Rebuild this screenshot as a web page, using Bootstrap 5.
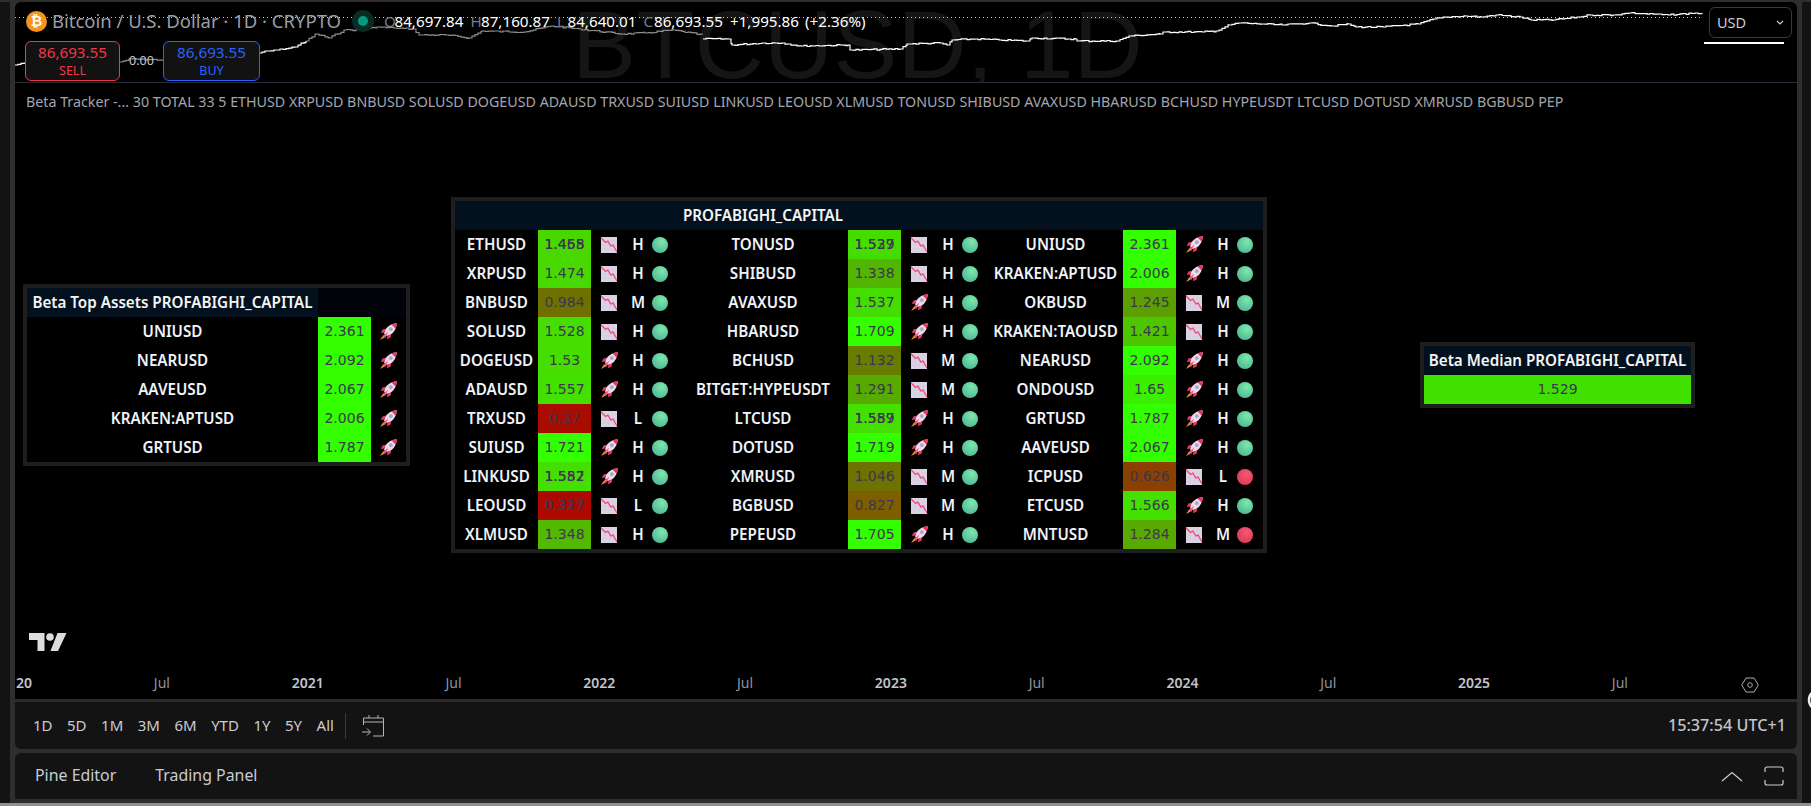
<!DOCTYPE html>
<html lang="en">
<head>
<meta charset="utf-8">
<title>BTCUSD 1D</title>
<link href="https://cdn.jsdelivr.net/npm/bootstrap@5.3.0/dist/css/bootstrap.min.css" rel="stylesheet">
<style>
html,body{height:806px;overflow:hidden}
body{background:#2e2e2e;font-family:"Noto Sans","Open Sans",sans-serif;color:#d1d4dc;padding-top:2px}
.side-l{width:10px;background:#131313;flex:none;height:801px}
.side-r{width:9px;background:#131313;flex:none;height:801px;overflow:hidden}
.side-r svg{display:block;margin-top:686px;margin-left:5px}
.main-col{width:1782px;margin:0 5px;flex:none}
.pane{height:699px;background:#000;overflow:hidden;border-radius:6px 6px 0 0;position:relative}
.chart-head{height:81px;border-bottom:1px solid #2a2e39;position:relative;overflow:hidden}
.spark{position:absolute;left:0;top:0}
.wm{position:absolute;left:557px;top:-21px;font:96px/128px "Liberation Sans",sans-serif;color:#151515;white-space:nowrap}
.head-row{position:relative;height:24px;margin-top:7px;padding-left:11px;white-space:nowrap}
.btc{width:21px;height:21px;border-radius:50%;background:#f7931a;color:#fff;font:700 14px/21px "Liberation Sans",sans-serif;text-align:center;flex:none}
.sym{font-size:18.5px;color:#9a9ea8;margin-left:5px;width:300px;flex:none}
.live{width:22px;height:22px;border-radius:50%;background:#0a2a24;flex:none;margin-right:10px}
.live i{width:10px;height:10px;border-radius:50%;background:#089981;display:block}
.ohlc{font-size:15.2px;color:#fff}
.ohlc b{display:inline-block;width:10.5px;font-weight:400;color:#787b86}
.ohlc span{display:block;flex:none}
.ohlc .pr{width:86.5px}
.ohlc .ch{width:75px}
.quote-row{position:relative;margin:8px 0 0 10px}
.qbtn{width:95px;height:40px;background:#121212;border:1px solid;border-radius:6px;text-align:center;font-size:15.2px;line-height:19px;padding-top:1px}
.qbtn small{display:block;font-size:12.5px;line-height:17px}
.qsell{color:#f23645;border-color:#f23645}
.qbuy{color:#2962ff;border-color:#2962ff;width:97px}
.zero{width:43px;text-align:center;font-size:12.5px;color:#c8c8c8;padding-top:11px}
.cur-wrap{position:absolute;left:1694px;top:5px;width:83px;height:31px;border:1px solid #3a3a3a;border-radius:6px;background:#000;font-size:14.5px;color:#c9ccd4;padding:0 7px}
.cur-bar{position:absolute;left:1689px;top:40px;width:80px;height:2px;background:#fff}
.ind-line{padding:9px 0 0 11px;height:30px;width:1549px;overflow:hidden;white-space:nowrap;font-size:14.25px;line-height:20px;color:#a3a6af}
.tv-box{border:4px solid #1e1e1e;background:#000}
.tv-tbl{table-layout:fixed;border-collapse:collapse;color:#f0f3fa;font-size:15.2px;font-weight:600}
.tv-tbl td{padding:0;height:29px;text-align:center;white-space:nowrap;line-height:29px;overflow:visible}
.tv-tbl .hd,.tv-tbl .hd td{background:#03111f;color:#f5f5f5}
.tv-tbl .hd-off{background:#020308}
.tv-tbl td.val{font:400 14px/29px "DejaVu Sans",sans-serif;color:#3d3650}
.stack{display:grid;justify-items:center}
.stack span{grid-area:1/1}
.tv-tbl svg{display:block;margin:0 auto}
.dotc{display:block;width:16px;height:16px;margin-left:3px;border-radius:50%;background:radial-gradient(circle at 62% 30%,#7de8ab,#4fb896 80%)}
.dotr{background:radial-gradient(circle at 62% 30%,#f4596f,#dc3a55 80%)}
.box-left{margin:171px 0 0 8px;width:387px}
.box-mid{margin:84px 0 0 41px;width:816px}
.box-right{margin:229px 0 0 153px;width:275px}
.tv-logo{position:absolute;left:14px;top:630px}
.axis{position:absolute;left:0;right:0;top:663px;height:36px;border-bottom:2px solid #2a2a2a;font-size:14px;line-height:18px;color:#8f939c;padding-top:9px}
.axis .y{color:#c2c5cc;font-weight:600}
.ax-first{width:74px;padding-left:1px}
.ax-item{width:145.8px;text-align:center;flex:none}
.ax-gear{position:absolute;left:1726px;top:12px}
.range-bar{height:47px;background:#131313;border-radius:0 0 6px 6px;padding:0 11px 0 18px;margin-top:1px;font-size:15px;color:#c9ccd4}
.range-bar .rg{margin-right:14.500px}
.range-sep{width:1px;height:26px;background:#3a3a3a;margin:0 16px 0 -3px}
.low-bar{height:46px;margin-top:4px;background:#131313;border-radius:6px 6px 0 0;padding:0 13px 0 20px;font-size:15.9px;color:#c9ccd4}
.low-bar .tab{margin-right:39px}
.low-bar .max-ic{margin-left:21px}
.clock{font-size:16.2px;color:#c2c5cc;font-weight:500}
.base-strip{position:absolute;left:0;right:0;bottom:0;height:3px;background:#8f9095}
</style>
</head>
<body class="d-flex position-relative">
<svg width="0" height="0" class="position-absolute">
  <symbol id="rk" viewBox="0 0 16 16">
    <path d="M15.800.2C11.500.5 7.500 2.500 4.900 6.100L3.800 9.800l2.500 2.500 3.700-1.200C13.600 8.500 15.600 4.500 15.800.2Z" fill="#f3dbe6"/>
    <path d="M15.800.2c-1.700.1-3.400.5-5 1.200l3.800 3.800c.7-1.600 1.100-3.300 1.200-5Z" fill="#f2335f"/>
    <circle cx="10.200" cy="5.800" r="1.700" fill="#86aee6" stroke="#d9a9c4" stroke-width=".5"/>
    <path d="M5.400 5.500 2.300 6 .8 9.400l3.300-.4ZM10.500 10.600 10 13.700 6.600 15.200l.4-3.300Z" fill="#ee3a6a"/>
    <path d="M7.800 8.200 4.900 14 3 11.600Z" fill="#f0608a"/>
    <path d="M3 11.500 0 16l4.600-2.300Z" fill="#f58a1f"/>
  </symbol>
  <symbol id="dn" viewBox="0 0 16 16">
    <rect width="16" height="16" fill="#ddd3e6"/>
    <path d="M0 4h16M0 8h16M0 12h16M4 0v16M8 0v16M12 0v16" stroke="#cfc4da" stroke-width=".5"/>
    <path d="M0 .8 4.500 5.500 6.800 4.200 10 9.200 12 8 16 15" fill="none" stroke="#ef4a78" stroke-width="1.300"/>
  </symbol>
</svg>

<div class="side-l"></div>

<div class="main-col">
  <div class="pane">
    <div class="chart-head">
      <div class="wm">BTCUSD, 1D</div>
      <svg class="spark" id="spark" width="1782" height="80"></svg>
      <div class="head-row d-flex align-items-center">
        <div class="btc">₿</div>
        <div class="sym">Bitcoin / U.S. Dollar · 1D · CRYPTO</div>
        <div class="live d-flex align-items-center justify-content-center"><i></i></div>
        <div class="ohlc d-flex"><span class="pr"><b>O</b>84,697.84</span><span class="pr"><b>H</b>87,160.87</span><span class="pr"><b>L</b>84,640.01</span><span class="pr"><b>C</b>86,693.55</span><span class="ch">+1,995.86</span><span>(+2.36%)</span></div>
      </div>
      <div class="quote-row d-flex">
        <div class="qbtn qsell">86,693.55<small>SELL</small></div>
        <div class="zero">0.00</div>
        <div class="qbtn qbuy">86,693.55<small>BUY</small></div>
      </div>
      <div class="cur-wrap d-flex align-items-center justify-content-between">USD
        <svg width="8" height="5" viewBox="0 0 8 5"><path d="M1 1l3 3 3-3" fill="none" stroke="#c9ccd4" stroke-width="1.200"/></svg>
      </div>
      <div class="cur-bar"></div>
    </div>

    <div class="ind-line">Beta Tracker -... 30 TOTAL 33 5 ETHUSD XRPUSD BNBUSD SOLUSD DOGEUSD ADAUSD TRXUSD SUIUSD LINKUSD LEOUSD XLMUSD TONUSD SHIBUSD AVAXUSD HBARUSD BCHUSD HYPEUSDT LTCUSD DOTUSD XMRUSD BGBUSD PEP</div>

    <div class="d-flex align-items-start">
      <div class="tv-box box-left">
        <table class="tv-tbl">
          <colgroup><col width="291"><col width="53"><col width="35"></colgroup>
          <tr><td class="hd">Beta Top Assets PROFABIGHI_CAPITAL</td><td class="hd-off" colspan="2"></td></tr>
          <tr><td>UNIUSD</td><td class="val" style="background:#33ff00">2.361</td><td><svg width="17" height="17"><use href="#rk"/></svg></td></tr>
          <tr><td>NEARUSD</td><td class="val" style="background:#33ff00">2.092</td><td><svg width="17" height="17"><use href="#rk"/></svg></td></tr>
          <tr><td>AAVEUSD</td><td class="val" style="background:#33ff00">2.067</td><td><svg width="17" height="17"><use href="#rk"/></svg></td></tr>
          <tr><td>KRAKEN:APTUSD</td><td class="val" style="background:#33ff00">2.006</td><td><svg width="17" height="17"><use href="#rk"/></svg></td></tr>
          <tr><td>GRTUSD</td><td class="val" style="background:#33ff00">1.787</td><td><svg width="17" height="17"><use href="#rk"/></svg></td></tr>
        </table>
      </div>

      <div class="tv-box box-mid">
        <table class="tv-tbl" id="midt">
          <colgroup><col width="83"><col width="53"><col width="36"><col width="22"><col width="29"><col width="170"><col width="53"><col width="36"><col width="22"><col width="29"><col width="135"><col width="53"><col width="36"><col width="22"><col width="29"></colgroup>
          <tr class="hd"><td colspan="5"></td><td>PROFABIGHI_CAPITAL</td><td colspan="9"></td></tr>
<tr>
<td>ETHUSD</td><td class="val" style="background:#48d800"><div class="stack"><span>1.458</span><span>1.465</span></div></td><td><svg width="16" height="16"><use href="#dn"/></svg></td><td>H</td><td><i class="dotc"></i></td>
<td>TONUSD</td><td class="val" style="background:#45dd00"><div class="stack"><span>1.529</span><span>1.537</span></div></td><td><svg width="16" height="16"><use href="#dn"/></svg></td><td>H</td><td><i class="dotc"></i></td>
<td>UNIUSD</td><td class="val" style="background:#33ff00">2.361</td><td><svg width="17" height="17"><use href="#rk"/></svg></td><td>H</td><td><i class="dotc"></i></td>
</tr>
<tr>
<td>XRPUSD</td><td class="val" style="background:#47d900">1.474</td><td><svg width="16" height="16"><use href="#dn"/></svg></td><td>H</td><td><i class="dotc"></i></td>
<td>SHIBUSD</td><td class="val" style="background:#52b600">1.338</td><td><svg width="16" height="16"><use href="#dn"/></svg></td><td>H</td><td><i class="dotc"></i></td>
<td>KRAKEN:APTUSD</td><td class="val" style="background:#33ff00">2.006</td><td><svg width="17" height="17"><use href="#rk"/></svg></td><td>H</td><td><i class="dotc"></i></td>
</tr>
<tr>
<td>BNBUSD</td><td class="val" style="background:#6e7000">0.984</td><td><svg width="16" height="16"><use href="#dn"/></svg></td><td>M</td><td><i class="dotc"></i></td>
<td>AVAXUSD</td><td class="val" style="background:#45dd00">1.537</td><td><svg width="17" height="17"><use href="#rk"/></svg></td><td>H</td><td><i class="dotc"></i></td>
<td>OKBUSD</td><td class="val" style="background:#5ba000">1.245</td><td><svg width="16" height="16"><use href="#dn"/></svg></td><td>M</td><td><i class="dotc"></i></td>
</tr>
<tr>
<td>SOLUSD</td><td class="val" style="background:#46dd00">1.528</td><td><svg width="16" height="16"><use href="#dn"/></svg></td><td>H</td><td><i class="dotc"></i></td>
<td>HBARUSD</td><td class="val" style="background:#33ff00">1.709</td><td><svg width="17" height="17"><use href="#rk"/></svg></td><td>H</td><td><i class="dotc"></i></td>
<td>KRAKEN:TAOUSD</td><td class="val" style="background:#4dc600">1.421</td><td><svg width="16" height="16"><use href="#dn"/></svg></td><td>H</td><td><i class="dotc"></i></td>
</tr>
<tr>
<td>DOGEUSD</td><td class="val" style="background:#46dd00">1.53</td><td><svg width="17" height="17"><use href="#rk"/></svg></td><td>H</td><td><i class="dotc"></i></td>
<td>BCHUSD</td><td class="val" style="background:#667d00">1.132</td><td><svg width="16" height="16"><use href="#dn"/></svg></td><td>M</td><td><i class="dotc"></i></td>
<td>NEARUSD</td><td class="val" style="background:#33ff00">2.092</td><td><svg width="17" height="17"><use href="#rk"/></svg></td><td>H</td><td><i class="dotc"></i></td>
</tr>
<tr>
<td>ADAUSD</td><td class="val" style="background:#43e000">1.557</td><td><svg width="17" height="17"><use href="#rk"/></svg></td><td>H</td><td><i class="dotc"></i></td>
<td>BITGET:HYPEUSDT</td><td class="val" style="background:#57ab00">1.291</td><td><svg width="16" height="16"><use href="#dn"/></svg></td><td>M</td><td><i class="dotc"></i></td>
<td>ONDOUSD</td><td class="val" style="background:#3af000">1.65</td><td><svg width="17" height="17"><use href="#rk"/></svg></td><td>H</td><td><i class="dotc"></i></td>
</tr>
<tr>
<td>TRXUSD</td><td class="val" style="background:#a80c00">0.37</td><td><svg width="16" height="16"><use href="#dn"/></svg></td><td>L</td><td><i class="dotc"></i></td>
<td>LTCUSD</td><td class="val" style="background:#44e100"><div class="stack"><span>1.557</span><span>1.589</span></div></td><td><svg width="17" height="17"><use href="#rk"/></svg></td><td>H</td><td><i class="dotc"></i></td>
<td>GRTUSD</td><td class="val" style="background:#33ff00">1.787</td><td><svg width="17" height="17"><use href="#rk"/></svg></td><td>H</td><td><i class="dotc"></i></td>
</tr>
<tr>
<td>SUIUSD</td><td class="val" style="background:#33ff00">1.721</td><td><svg width="17" height="17"><use href="#rk"/></svg></td><td>H</td><td><i class="dotc"></i></td>
<td>DOTUSD</td><td class="val" style="background:#33ff00">1.719</td><td><svg width="17" height="17"><use href="#rk"/></svg></td><td>H</td><td><i class="dotc"></i></td>
<td>AAVEUSD</td><td class="val" style="background:#33ff00">2.067</td><td><svg width="17" height="17"><use href="#rk"/></svg></td><td>H</td><td><i class="dotc"></i></td>
</tr>
<tr>
<td>LINKUSD</td><td class="val" style="background:#44df00"><div class="stack"><span>1.582</span><span>1.557</span></div></td><td><svg width="17" height="17"><use href="#rk"/></svg></td><td>H</td><td><i class="dotc"></i></td>
<td>XMRUSD</td><td class="val" style="background:#6e7200">1.046</td><td><svg width="16" height="16"><use href="#dn"/></svg></td><td>M</td><td><i class="dotc"></i></td>
<td>ICPUSD</td><td class="val" style="background:#8c4000">0.626</td><td><svg width="16" height="16"><use href="#dn"/></svg></td><td>L</td><td><i class="dotc dotr"></i></td>
</tr>
<tr>
<td>LEOUSD</td><td class="val" style="background:#ad0900"><div class="stack"><span>0.327</span><span>0.317</span></div></td><td><svg width="16" height="16"><use href="#dn"/></svg></td><td>L</td><td><i class="dotc"></i></td>
<td>BGBUSD</td><td class="val" style="background:#7e5f00">0.827</td><td><svg width="16" height="16"><use href="#dn"/></svg></td><td>M</td><td><i class="dotc"></i></td>
<td>ETCUSD</td><td class="val" style="background:#44e100">1.566</td><td><svg width="17" height="17"><use href="#rk"/></svg></td><td>H</td><td><i class="dotc"></i></td>
</tr>
<tr>
<td>XLMUSD</td><td class="val" style="background:#52b800">1.348</td><td><svg width="16" height="16"><use href="#dn"/></svg></td><td>H</td><td><i class="dotc"></i></td>
<td>PEPEUSD</td><td class="val" style="background:#33ff00">1.705</td><td><svg width="17" height="17"><use href="#rk"/></svg></td><td>H</td><td><i class="dotc"></i></td>
<td>MNTUSD</td><td class="val" style="background:#58a900">1.284</td><td><svg width="16" height="16"><use href="#dn"/></svg></td><td>M</td><td><i class="dotc dotr"></i></td>
</tr>
        </table>
      </div>

      <div class="tv-box box-right">
        <table class="tv-tbl w-100">
          <tr><td class="hd">Beta Median PROFABIGHI_CAPITAL</td></tr>
          <tr><td class="val" style="background:#40e000">1.529</td></tr>
        </table>
      </div>
    </div>

    <svg class="tv-logo" width="38" height="20" viewBox="0 0 38 20"><path d="M0 1h15.500v18h-7V8H0Z" fill="#dcdcdc"/><circle cx="21" cy="5" r="3.800" fill="#dcdcdc"/><path d="M28.500 1H37.500L29 19H21.500Z" fill="#dcdcdc"/></svg>

    <div class="axis d-flex">
      <div class="ax-first y">20</div>
      <div class="ax-item">Jul</div><div class="ax-item y">2021</div>
      <div class="ax-item">Jul</div><div class="ax-item y">2022</div>
      <div class="ax-item">Jul</div><div class="ax-item y">2023</div>
      <div class="ax-item">Jul</div><div class="ax-item y">2024</div>
      <div class="ax-item">Jul</div><div class="ax-item y">2025</div>
      <div class="ax-item">Jul</div>
      <svg class="ax-gear" width="18" height="16" viewBox="0 0 18 16"><path d="M5 1h8l4.300 7L13 15H5L.7 8Z" fill="none" stroke="#a8abb3"/><circle cx="9" cy="8" r="2.300" fill="none" stroke="#a8abb3"/></svg>
    </div>
  </div>

  <div class="range-bar d-flex align-items-center">
    <span class="rg">1D</span><span class="rg">5D</span><span class="rg">1M</span><span class="rg">3M</span><span class="rg">6M</span><span class="rg">YTD</span><span class="rg">1Y</span><span class="rg">5Y</span><span class="rg">All</span>
    <span class="range-sep"></span>
    <svg width="23" height="23" viewBox="0 0 23 23"><path d="M1.500 11V4h20v18H11M1.500 8h20M7 1v3M16 1v3M0 18h8M5 14.500 8.500 18 5 21.500" fill="none" stroke="#b2b5be"/></svg>
    <span class="clock ms-auto">15:37:54 UTC+1</span>
  </div>

  <div class="low-bar d-flex align-items-center">
    <span class="tab">Pine Editor</span><span class="tab">Trading Panel</span>
    <svg class="ms-auto" width="22" height="11" viewBox="0 0 22 11"><path d="M1 10 11 1.500 21 10" fill="none" stroke="#c9ccd4" stroke-width="1.200"/></svg>
    <svg class="max-ic" width="20" height="20" viewBox="0 0 20 20"><path d="M1 6V3a2 2 0 0 1 2-2h14a2 2 0 0 1 2 2v3M1 14v3a2 2 0 0 0 2 2h14a2 2 0 0 0 2-2v-3" fill="none" stroke="#c9ccd4" stroke-width="1.200"/></svg>
  </div>
</div>

<div class="side-r"><svg width="10" height="24" viewBox="0 0 10 24"><circle cx="12" cy="12" r="10" fill="none" stroke="#eee" stroke-width="2.500"/></svg></div>
<div class="base-strip"></div>

<script>
(function(){
  var grey1=[[105,60],[115,57],[148,58]];
  var white=[[0,63],[10,61]], white2=[[244,51],[253,49],[280,45],[291,39]];
  var grey=[[291,39],[301,32],[314,36],[329,28],[345,28],[362,25],[379,26],[398,27],[404,33],[431,33],[454,36],[467,29],[509,30],[536,24],[564,27],[607,32],[630,31],[658,28],[687,33]];
  var w3=[[688,37],[713,37],[717,43],[748,41],[767,41],[786,44],[833,43],[835,48],[885,47],[892,42],[925,41],[932,43],[937,38],[960,37],[984,38],[1012,39],[1017,36],[1060,37],[1062,39],[1102,39],[1114,34],[1145,32],[1149,30],[1187,30],[1201,29],[1214,23],[1224,21],[1247,22],[1267,23],[1294,21],[1317,24],[1333,22],[1341,25],[1368,25],[1403,22],[1419,17],[1431,15],[1450,14],[1466,15],[1481,13],[1505,15],[1516,18],[1538,18],[1563,15],[1575,13],[1598,13],[1614,11],[1653,13],[1680,11],[1687,12]];
  var seed=7;function rnd(){seed=(seed*9301+49297)%233280;return seed/233280}
  function mk(a){var d='M'+a[0][0]+' '+a[0][1];
    for(var i=1;i<a.length;i++){var x0=a[i-1][0],y0=a[i-1][1],x1=a[i][0],y1=a[i][1];
      for(var x=x0+3;x<x1;x+=3){var y=y0+(y1-y0)*(x-x0)/(x1-x0)+(rnd()-.5)*1.4;d+='H'+x+'V'+y.toFixed(1)}
      d+='H'+x1+'V'+y1}
    return d}
  var ns='http://www.w3.org/2000/svg',s=document.getElementById('spark');
  var dot=document.createElementNS(ns,'path');dot.setAttribute('d','M0 15.500H1687');dot.setAttribute('stroke','#c8c8c8');dot.setAttribute('stroke-dasharray','1 3');s.appendChild(dot);
  [[grey1,'#8c8c8c'],[grey,'#8c8c8c'],[white,'#fff'],[white2,'#fff'],[w3,'#fff']].forEach(function(p){
    var e=document.createElementNS(ns,'path');e.setAttribute('d',mk(p[0]));e.setAttribute('fill','none');e.setAttribute('stroke',p[1]);e.setAttribute('stroke-width','1.200');s.appendChild(e)});
})();
</script>
<script src="https://cdn.jsdelivr.net/npm/bootstrap@5.3.0/dist/js/bootstrap.bundle.min.js"></script>
</body>
</html>
